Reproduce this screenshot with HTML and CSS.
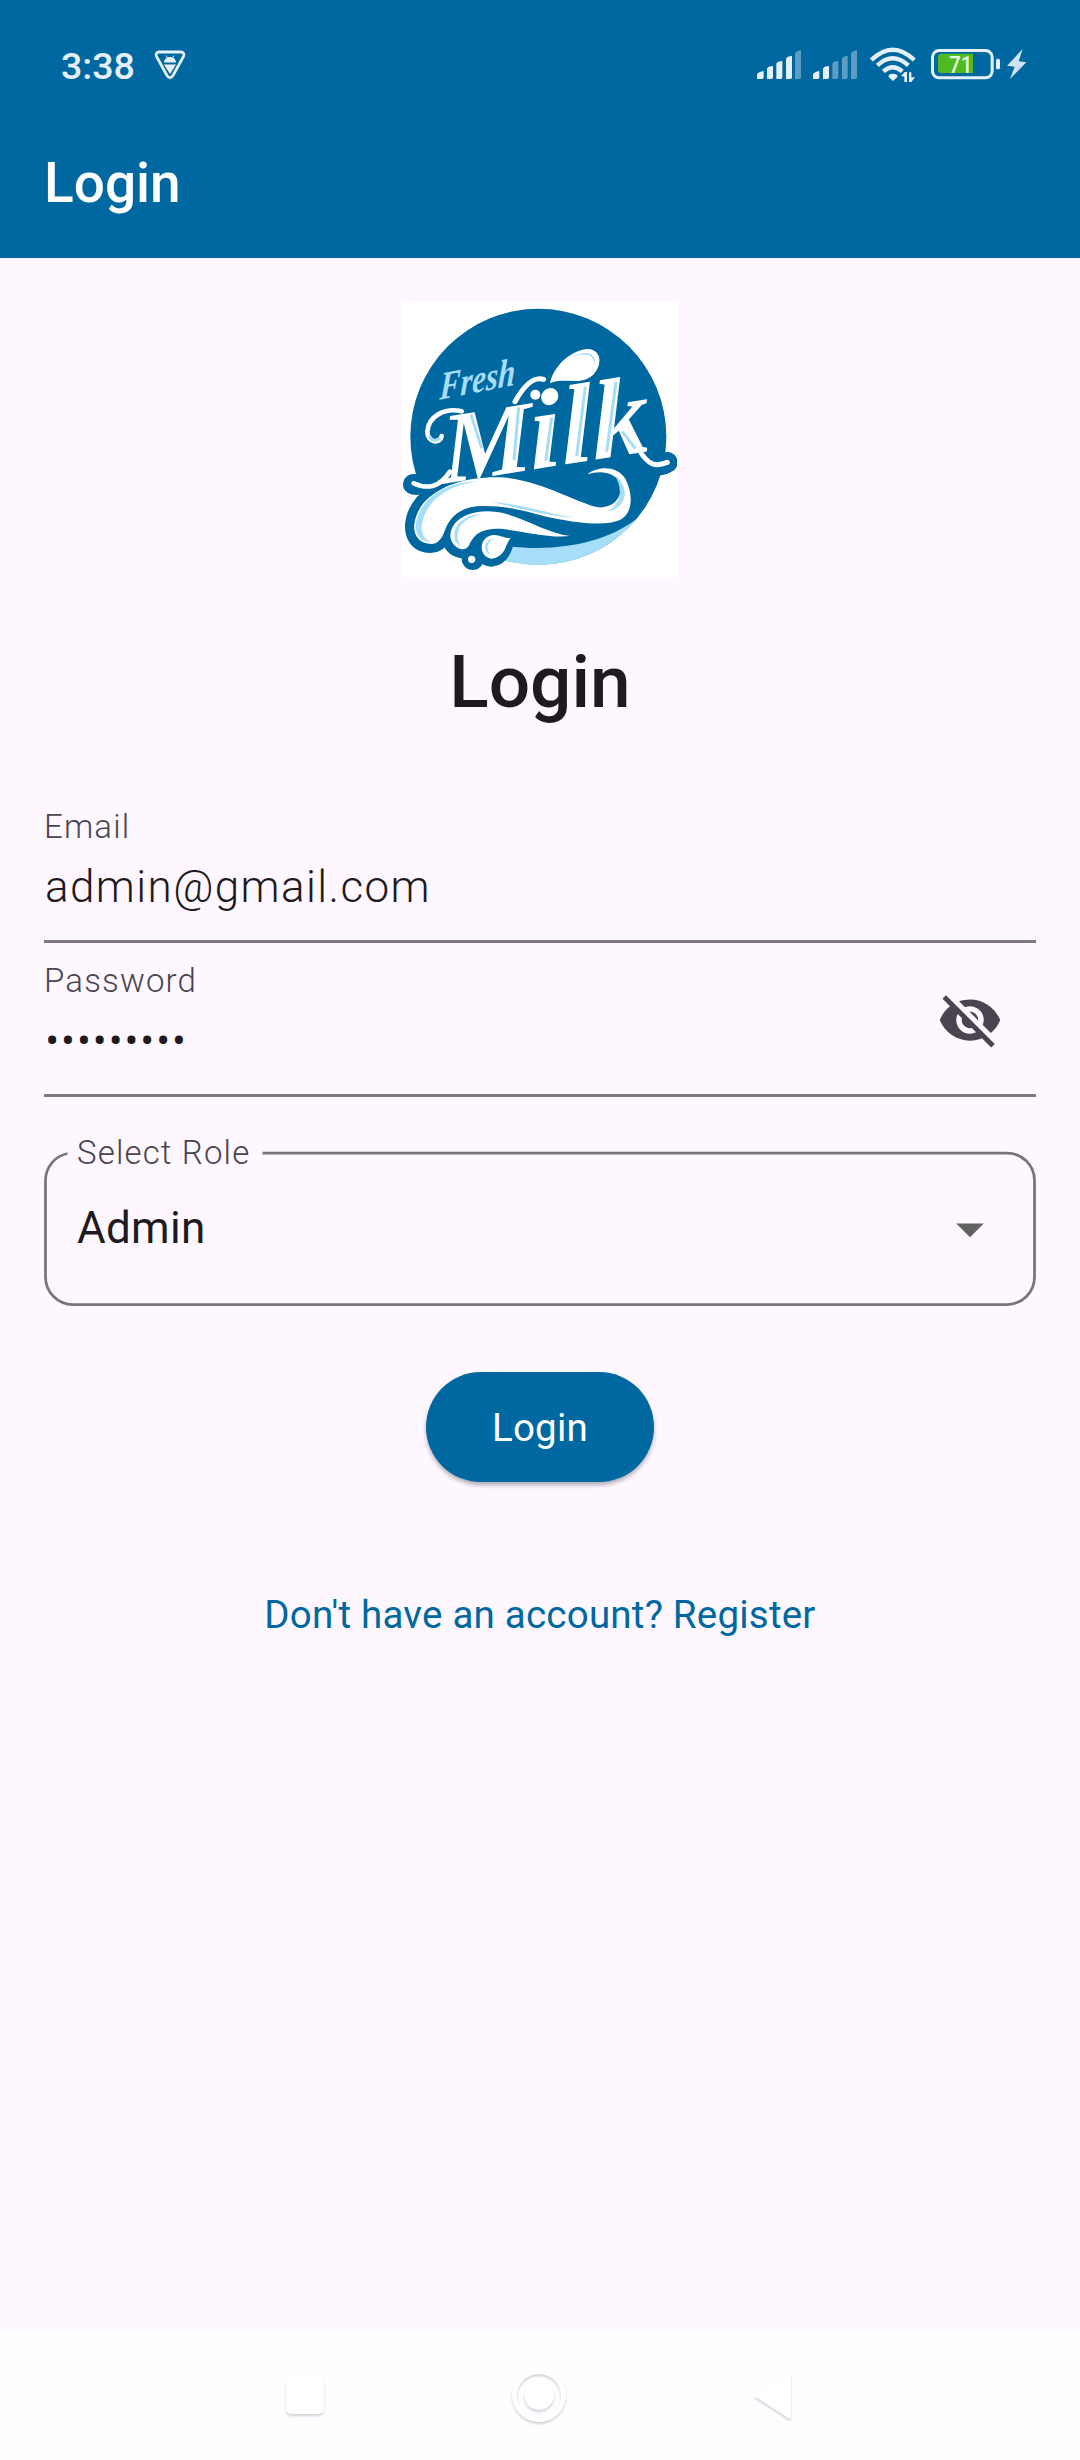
FILE: index.html
```html
<!DOCTYPE html>
<html lang="en">
<head>
<meta charset="utf-8">
<title>Login</title>
<link rel="stylesheet" href="styles.css">
</head>
<body>
<div class="screen">
  <header class="header">
    <div class="status-bar">
      <span class="clock">3:38</span>
      <svg class="debug-icon" width="32" height="30" viewBox="0 0 32 30">
        <path d="M5 2H27Q31 2.5 29.500 6.500L19 25.500Q16 30 13 25.500L2.500 6.500Q1 2.500 5 2Z" fill="none" stroke="#e6f0f8" stroke-width="2.800"/>
        <path d="M10 12.500C10 5 22 5 22 12.500ZM10 14.500H22L16 24Z" fill="#e6f0f8"/>
        <path d="M12 5.500L13.500 8M20 5.500L18.500 8" stroke="#e6f0f8"/>
      </svg>
      <svg class="system-icons" width="300" height="70" viewBox="0 0 900 210">
        <g fill="#e6f0f8">
          <path d="M51 147V133Q55 126 71 123V142Q71 147 66 147ZM81 147V116Q84 109 99 108V142Q99 147 94 147ZM109 147V101Q112 94 127 93V142Q127 147 122 147ZM138 147V86Q141 79 156 77V142Q156 147 151 147Z"/>
          <path d="M219 147V133Q223 126 238 123V142Q238 147 233 147ZM249 147V116Q252 109 267 108V142Q267 147 262 147Z"/>
          <g opacity=".4">
            <path d="M165 147V71Q168 64 183 61V142Q183 147 178 147ZM277 147V101Q280 94 295 93V142Q295 147 290 147ZM306 147V86Q309 79 323 77V142Q323 147 318 147ZM333 147V71Q336 64 351 61V142Q351 147 346 147Z"/>
          </g>
          <path d="M446 141Q443 132 459 131Q475 132 472 141L459 153Z"/>
          <path d="M483 138L494 126H501V156H493V140ZM507 156V127H514V142H525L514 156Z"/>
          <rect x="768" y="86" width="12" height="32" rx="5"/>
          <path d="M848 57L801 107L824 110L810 147L859 97L836 94Z" fill="#cfe4f2"/>
        </g>
        <g fill="none" stroke="#e6f0f8" stroke-width="13">
          <path d="M394 90Q458 28 523 90M412 106Q458 63 505 106M430 124Q458 99 487 124"/>
          <rect x="577.500" y="61.500" width="179" height="82" rx="20" stroke-width="9"/>
        </g>
        <path d="M604 71H699V129H604Q594 129 594 119V81Q594 71 604 71Z" fill="#4fbb23"/>
        <text class="battery-level" x="627" y="129" textLength="70" lengthAdjust="spacingAndGlyphs">71</text>
      </svg>
    </div>
    <div class="app-bar"><h1 class="app-title">Login</h1></div>
  </header>

  <main class="content">
    <svg class="logo" viewBox="36 36 825 825">
      <rect x="36" y="36" width="825" height="825" fill="#fff"/>
      <circle cx="445" cy="440.500" r="384" fill="#0068a1"/>
      <path d="M739 688A384.500 384.500 0 0 1 345 811.500L350 768C500 786 640 762 739 688Z" fill="#a6defa"/>
      <g fill="#0068a1" stroke="#0068a1" stroke-width="54" stroke-linejoin="round">
        <path d="M70 583C120 590 160 540 180 470M780 525C815 530 825 520 832 517" fill="none" stroke-width="62" stroke-linecap="round"/>
        <path d="M120 762C60 760 60 690 100 640C150 585 230 560 330 562L540 680L270 648C210 652 180 680 165 720C155 750 140 762 120 762Z"/>
        <path d="M215 778C180 770 170 730 195 700C225 665 290 655 350 672L440 728L340 717C290 712 255 725 240 760Z"/>
        <path d="M345 748C345 760 335 800 305 803C265 800 265 745 305 736Z"/>
        <circle cx="248" cy="807" r="33" stroke="none"/>
      </g>
      <g fill="#fff">
        <path d="M125 762C60 760 60 690 100 640C150 585 230 560 330 562C450 568 560 640 625 652C680 655 700 610 690 580C675 545 630 540 592 553C620 528 680 525 705 565C730 610 730 670 690 690C640 712 540 695 470 680C400 662 340 645 270 648C210 652 180 680 165 720C155 750 140 762 125 762Z"/>
        <path d="M215 778C180 770 170 730 195 700C225 665 290 655 350 672C410 690 480 730 540 738C480 745 400 725 340 717C290 712 255 725 240 760C235 775 225 778 215 778Z"/>
        <path d="M362 745C345 760 350 800 305 806C265 800 265 745 305 736C325 732 340 745 362 745Z"/>
        <circle cx="245" cy="808" r="11"/>
        <path d="M480 280C490 230 540 180 595 177C635 180 638 225 610 254C570 290 520 260 480 280Z"/>
        <circle cx="436" cy="314" r="15"/>
      </g>
      <g fill="#a6defa">
        <path d="M125 756C85 745 85 690 125 640C160 600 210 580 270 574C180 575 120 610 92 660C65 710 75 755 125 756Z"/>
        <path d="M215 769C180 755 190 705 222 687C240 676 255 673 272 674C235 682 212 697 205 722C200 745 205 760 215 769Z"/>
        <path d="M305 797C275 785 280 750 314 744C290 757 285 778 305 797Z"/>
        <path d="M305 637C400 640 480 675 560 683C480 682 380 650 305 637ZM674 555C720 590 715 655 650 664C700 640 696 590 674 555ZM545 203C580 180 620 183 616 225C610 190 585 187 545 203Z"/>
      </g>
      <g fill="none" stroke="#fff" stroke-linecap="round">
        <path d="M155 438C152 462 112 460 112 425C115 378 165 352 215 364" stroke-width="14"/>
        <path d="M180 545C150 590 115 600 71 580" stroke-width="14"/>
        <path d="M375 335C400 290 430 258 461 268" stroke-width="15"/>
        <path d="M745 475C775 530 800 530 832 517" stroke-width="15"/>
      </g>
      <g transform="translate(350 553) skewY(-9) skewX(3)">
        <text class="logo-word" y="-2" x="-190 73 168 262"><tspan class="logo-initial">M</tspan>ilk</text>
      </g>
      <path d="M243 374L275 475M386 352L372 510M485 382L467 512M586 290L560 498M678 276L650 486M697 425L736 476M118 438Q130 460 150 444" fill="none" stroke="#a6defa" stroke-width="9"/>
      <text class="logo-script" x="0" y="0" transform="translate(148 329) skewY(-11) skewX(-3)" textLength="226" lengthAdjust="spacingAndGlyphs">Fresh</text>
    </svg>

    <h2 class="title">Login</h2>

    <div class="field">
      <span class="field-label">Email</span>
      <span class="field-value">admin@gmail.com</span>
    </div>
    <div class="field field-password">
      <div class="field-text">
        <span class="field-label">Password</span>
        <span class="field-value dots">•••••••••</span>
      </div>
      <svg class="eye" width="66" height="66" viewBox="0 0 24 24"><path fill="#49454f" d="M12 7c2.760 0 5 2.240 5 5 0 .65-.13 1.260-.36 1.830l2.920 2.920c1.510-1.260 2.700-2.890 3.430-4.750-1.730-4.390-6-7.500-11-7.500-1.400 0-2.740.25-3.980.7l2.160 2.160C10.740 7.130 11.350 7 12 7zM2 4.270l2.280 2.280.46.46C3.080 8.300 1.780 10.020 1 12c1.730 4.390 6 7.500 11 7.500 1.550 0 3.030-.3 4.380-.84l.42.42L19.730 22 21 20.730 3.270 3 2 4.270zM7.530 9.800l1.550 1.550c-.05.21-.08.43-.08.65 0 1.660 1.340 3 3 3 .22 0 .44-.03.65-.08l1.550 1.550c-.67.33-1.410.53-2.200.53-2.760 0-5-2.240-5-5 0-.79.2-1.530.53-2.200zm4.310-.78l3.150 3.150.02-.16c0-1.660-1.340-3-3-3l-.17.01z"/></svg>
    </div>

    <div class="select">
      <svg class="select-outline" width="992" height="171" viewBox="0 0 992 171"><path d="M218.500 18H963A27.500 27.500 0 0 1 990.500 45.500V142A27.500 27.500 0 0 1 963 169.500H29A27.500 27.500 0 0 1 1.500 142V45.500A27.500 27.500 0 0 1 23.500 18.500" fill="none" stroke="#79747e" stroke-width="2.750"/></svg>
      <span class="select-label">Select Role</span>
      <div class="select-row">
        <span class="select-value">Admin</span>
        <svg width="66" height="66" viewBox="0 0 24 24"><path fill="#616161" d="M7 10l5 5 5-5z"/></svg>
      </div>
    </div>

    <button class="login-button">Login</button>
    <a class="register-link">Don't have an account? Register</a>
  </main>

  <nav class="nav-bar">
    <svg width="40" height="56" viewBox="0 0 40 56"><rect x="1" y="9" width="38" height="37" rx="5"/></svg>
    <svg width="60" height="60" viewBox="0 0 60 60"><path fill-rule="evenodd" d="M30 2a27 27 0 1 0 .01 0ZM30 8a22 22 0 1 1-.01 0Z"/><circle cx="30" cy="29" r="15"/></svg>
    <svg width="40" height="56" viewBox="0 0 40 56"><path d="M1 28L36 6Q38 5 38 8V48Q38 52 35 50Z"/></svg>
  </nav>
</div>
</body>
</html>
```
FILE: styles.css
```css
* { box-sizing: border-box; }

body {
  margin: 0;
  font-family: Roboto, sans-serif;
  color: #1d1b20;
  background: #fef7ff;
}

.screen {
  width: 1080px;
  height: 2460px;
  display: flex;
  flex-direction: column;
}

.header {
  height: 258px;
  background: #0068a1;
  color: #fff;
}

.status-bar {
  height: 104px;
  padding: 30px 40px 0 61px;
  display: flex;
  align-items: flex-start;
}

.clock {
  font-size: 37.5px;
  line-height: 72px;
  font-weight: 500;
  color: #e6f0f8;
}

.debug-icon { margin: 20px 0 0 19px; }
.system-icons { margin-left: auto; }

.battery-level {
  font-size: 72px;
  font-weight: 500;
  fill: #e9f7e4;
}

.app-bar {
  height: 154px;
  padding: 0 44px;
  display: flex;
  align-items: center;
}

.app-title {
  margin: 4px 0 0;
  font-size: 55px;
  line-height: 70px;
  font-weight: 500;
}

.content {
  flex: 1;
  padding: 44px 44px 0;
  display: flex;
  flex-direction: column;
  align-items: center;
}

.logo {
  width: 275px;
  height: 275px;
  margin-right: 1px;
}

.logo-word {
  font: italic 700 340px "Liberation Serif", serif;
  fill: #fff;
}

.logo-initial { font-size: 305px; }

.logo-script {
  font: italic 700 118px "Liberation Serif", serif;
  fill: #a6defa;
}

.title {
  margin: 55px 0 57px;
  font-size: 73px;
  line-height: 100px;
  font-weight: 500;
}

.field {
  width: 992px;
  height: 154px;
  padding-top: 19px;
  border-bottom: 3px solid #7d7882;
  display: flex;
  flex-direction: column;
}

.field-password {
  flex-direction: row;
  justify-content: space-between;
}

.field-text {
  display: flex;
  flex-direction: column;
}

.field-label,
.select-label {
  font-size: 33px;
  line-height: 38px;
  font-weight: 300;
  letter-spacing: 1.15px;
  color: #49454f;
}

.field-value {
  margin-top: 16px;
  padding-left: 1px;
  font-size: 44px;
  line-height: 50px;
  font-weight: 300;
  letter-spacing: 1.4px;
}

.dots { letter-spacing: 1.6px; }

.eye { margin: 25px 33px 0 0; }

.select {
  position: relative;
  width: 992px;
  height: 171px;
  margin-top: 38px;
  padding: 0 33px;
}

.select-outline {
  position: absolute;
  left: 0;
  top: 0;
}

.select-label {
  display: block;
  line-height: 36px;
}

.select-row {
  margin-top: 25px;
  display: flex;
  align-items: center;
  justify-content: space-between;
}

.select-value {
  margin-bottom: 2px;
  font-size: 44px;
  line-height: 50px;
  letter-spacing: .3px;
}

.login-button {
  width: 228px;
  height: 110px;
  margin-top: 66px;
  border: 0;
  border-radius: 55px;
  background: #0068a1;
  color: #fff;
  font: 400 38.5px/110px Roboto, sans-serif;
  letter-spacing: .2px;
  box-shadow: 0 3px 4px rgba(0, 0, 0, .3);
}

.register-link {
  margin-top: 107px;
  font-size: 38.5px;
  line-height: 52px;
  letter-spacing: .22px;
  color: #0068a1;
}

.nav-bar {
  height: 130px;
  padding: 0 287px 0 285px;
  background: #fefdff;
  display: flex;
  align-items: center;
  justify-content: space-between;
}

.nav-bar svg {
  fill: #fff;
  filter: drop-shadow(0 2px 1px rgba(70, 60, 80, .22));
  margin-top: 1px;
}
```
